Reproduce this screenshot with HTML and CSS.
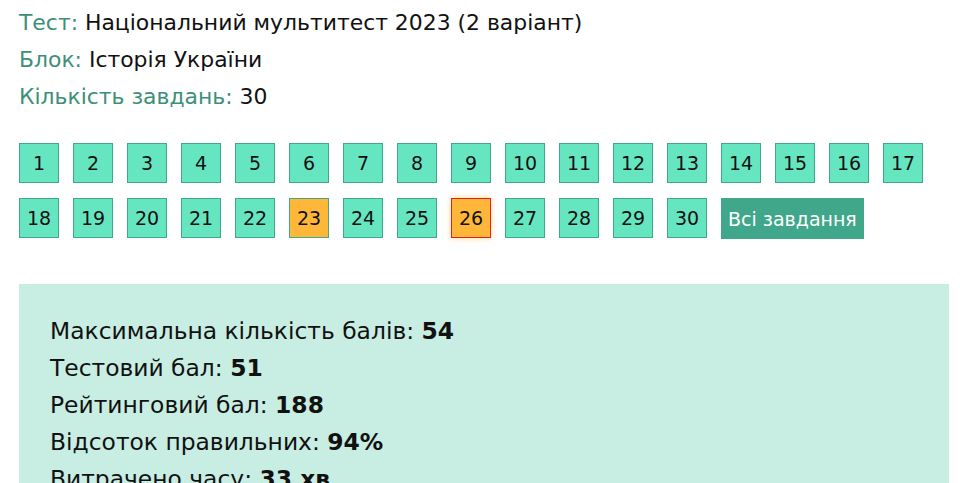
FILE: index.html
```html
<!DOCTYPE html>
<html lang="uk">
<head>
<meta charset="utf-8">
<link rel="stylesheet" href="styles.css">
</head>
<body>
<div class="page">
  <div class="info">
    <div class="info-line"><span class="label">Тест:</span> Національний мультитест 2023 (2 варіант)</div>
    <div class="info-line"><span class="label">Блок:</span> Історія України</div>
    <div class="info-line"><span class="label">Кількість завдань:</span> 30</div>
  </div>
  <div class="tasks">
    <a class="task">1</a><a class="task">2</a><a class="task">3</a><a class="task">4</a><a class="task">5</a><a class="task">6</a><a class="task">7</a><a class="task">8</a><a class="task">9</a><a class="task">10</a><a class="task">11</a><a class="task">12</a><a class="task">13</a><a class="task">14</a><a class="task">15</a><a class="task">16</a><a class="task">17</a>
    <a class="task">18</a><a class="task">19</a><a class="task">20</a><a class="task">21</a><a class="task">22</a><a class="task task-warn">23</a><a class="task">24</a><a class="task">25</a><a class="task task-warn task-current">26</a><a class="task">27</a><a class="task">28</a><a class="task">29</a><a class="task">30</a>
    <a class="all-tasks">Всі завдання</a>
  </div>
  <div class="stats">
    <div class="stat">Максимальна кількість балів: <b>54</b></div>
    <div class="stat">Тестовий бал: <b>51</b></div>
    <div class="stat">Рейтинговий бал: <b>188</b></div>
    <div class="stat">Відсоток правильних: <b>94%</b></div>
    <div class="stat">Витрачено часу: <b>33 хв</b></div>
  </div>
</div>
</body>
</html>
```
FILE: styles.css
```css
html, body {
  margin: 0;
  padding: 0;
  background: #ffffff;
}
body {
  font-family: "DejaVu Sans", "Liberation Sans", sans-serif;
  color: #111;
  overflow: hidden;
}
.page {
  width: 930px;
  padding: 4px 0 0 19px;
}
.info-line {
  font-size: 21.9px;
  line-height: 37px;
  color: #111;
}
.label {
  color: #3d8f79;
}
.tasks {
  display: flex;
  flex-wrap: wrap;
  column-gap: 14px;
  row-gap: 15px;
  margin-top: 28px;
  width: 920px;
}
.task {
  box-sizing: border-box;
  width: 40px;
  height: 40px;
  background: #66e6c0;
  border: 1px solid #3fa98a;
  display: flex;
  align-items: center;
  justify-content: center;
  font-size: 19px;
  color: #111;
}
.task-warn {
  background: #ffb73a;
}
.task-current {
  border-color: #e0202c;
  box-shadow: 0 0 6px rgba(255, 190, 60, 0.6);
}
.all-tasks {
  box-sizing: border-box;
  height: 41px;
  padding: 0 7px;
  background: #41a78a;
  color: #ffffff;
  display: flex;
  align-items: center;
  font-size: 19px;
}
.stats {
  margin-top: 45px;
  background: #c8ede2;
  padding: 29px 31px 20px;
  width: 930px;
  box-sizing: border-box;
  height: 260px;
}
.stat {
  font-size: 23.4px;
  line-height: 37px;
  color: #111;
}
.stat b {
  font-weight: bold;
}
```
